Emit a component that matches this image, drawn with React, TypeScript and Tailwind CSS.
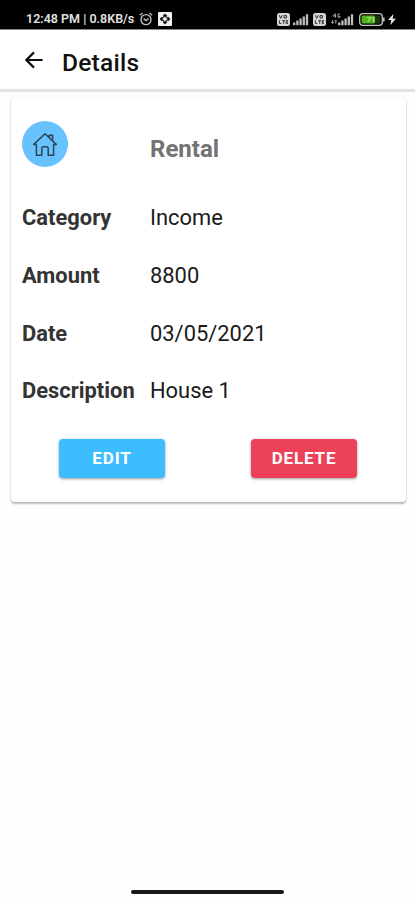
import type { ReactNode } from "react";

type Detail = { label: string; value: string };

const details: Detail[] = [
  { label: "Category", value: "Income" },
  { label: "Amount", value: "8800" },
  { label: "Date", value: "03/05/2021" },
  { label: "Description", value: "House 1" },
];

function AlarmIcon() {
  return (
    <svg width="14" height="14" viewBox="0 0 14 14" fill="none" stroke="#bdbdbd" strokeWidth="1.4">
      <circle cx="7" cy="7.6" r="5" />
      <path d="M.8 3.2 3.6 1M13.2 3.2 10.4 1M4.6 6.6 7 8.6l2.6-2" />
    </svg>
  );
}

function AppBadgeIcon() {
  return (
    <svg width="14" height="14" viewBox="0 0 14 14">
      <rect width="14" height="14" rx="1" fill="#f2f2f2" />
      <path d="M7 1.6 12.4 7 7 12.4 1.6 7Z" fill="#111" />
      <path d="M7 4.4 9.6 7 7 9.6 4.4 7Z" fill="#e8e8e8" />
      <path d="M3.2 3.2l2 2M10.8 3.2l-2 2M3.2 10.8l2-2M10.8 10.8l-2-2" stroke="#f2f2f2" strokeWidth="1.2" />
    </svg>
  );
}

function VolteIcon() {
  return (
    <svg width="13" height="13" viewBox="0 0 13 13">
      <rect width="13" height="13" rx="2.5" fill="#d6d6d6" />
      <path
        d="M2.2 2.2 3.7 5.4 5.2 2.2M7 2.6h2.4v2.4H7zM2.4 7.4v3h2M5.4 7.6h2.6M6.7 7.6v3.2M11 7.6H9.2v2.8H11M9.2 9H11"
        fill="none"
        stroke="#333"
        strokeWidth="1"
      />
    </svg>
  );
}

function SignalIcon({ network }: { network?: boolean }) {
  return (
    <svg width="23" height="13" viewBox="0 0 23 13" className={network ? "" : "-ml-[6px]"}>
      {network && (
        <path
          d="M4 .6 2 3h3M4.4.8v3.8M9 1.2H7v3h2V3M1.6 7v3.4M.4 9l1.2 1.4L2.8 9M4.8 10.6V7.2M3.8 8.2l1-1 1 1"
          fill="none"
          stroke="#a8a8a8"
          strokeWidth="1"
        />
      )}
      <path
        d="M8.2 12.2V9.4M11.4 12.2V7.6M14.6 12.2V5.4M17.8 12.2V3.4M21 12.2V1.2"
        stroke="#bdbdbd"
        strokeWidth="2.3"
      />
    </svg>
  );
}

function BatteryIcon() {
  return (
    <svg width="27" height="13" viewBox="0 0 27 13">
      <rect x=".7" y=".7" width="22.6" height="11.6" rx="3" fill="none" stroke="#c4c4c4" strokeWidth="1.3" />
      <rect x="2.6" y="2.6" width="13.4" height="7.8" rx="1" fill="#4fb31d" />
      <rect x="16" y="2.6" width="5.2" height="7.8" rx="1" fill="#1c3513" />
      <path d="M24.8 4.4v4.2" stroke="#c4c4c4" strokeWidth="1.6" />
      <text x="12" y="9.4" textAnchor="middle" fontSize="8" fontWeight="700" fill="#a9e08c">
        71
      </text>
    </svg>
  );
}

function StatusBar() {
  return (
    <div className="flex h-[30px] items-center justify-between border-b border-[#888] bg-black pt-[9px] pr-[19px] pl-[26px]">
      <div className="flex items-center">
        <span className="w-[111px] text-[12.5px] leading-none font-semibold whitespace-nowrap text-[#e0e0e0]">
          12:48 PM | 0.8KB/s
        </span>
        <span className="mr-[5px] ml-[2px]">
          <AlarmIcon />
        </span>
        <AppBadgeIcon />
      </div>
      <div className="flex items-center">
        <VolteIcon />
        <span className="mr-1 ml-[2px]">
          <SignalIcon />
        </span>
        <VolteIcon />
        <span className="mr-[5px] ml-[5px]">
          <SignalIcon network />
        </span>
        <BatteryIcon />
        <svg width="8" height="11" viewBox="0 0 8 11" className="ml-[2px]">
          <path d="M5.4 0 0 6h3.2L2.4 11 8 4.8H4.7Z" fill="#e6e6e6" />
        </svg>
      </div>
    </div>
  );
}

function HouseIcon() {
  return (
    <svg
      width="26"
      height="26"
      viewBox="0 0 26 26"
      fill="none"
      stroke="#2f4352"
      strokeWidth="1.5"
      strokeLinejoin="round"
      strokeLinecap="round"
    >
      <path d="M1.8 13.4 13 2.8l11.2 10.6M17.2 6.4V4.2h3.4v5.4" />
      <path d="M1.8 13.4h2.6v10.8h5.4v-6.6q0-1.8 1.8-1.8h2.8q1.8 0 1.8 1.8v6.6h5.4V13.4h2.4" />
    </svg>
  );
}

function ActionButton({ className, children }: { className: string; children: ReactNode }) {
  return (
    <button
      type="button"
      className={`h-[39px] w-[106px] rounded-[4px] text-[17px] font-bold tracking-[0.05em] shadow-[0_1px_3px_rgba(0,0,0,0.4)] ${className}`}
    >
      {children}
    </button>
  );
}

export default function App() {
  return (
    <div className="flex h-[900px] w-full flex-col overflow-hidden bg-[#fefefe] font-['Roboto',sans-serif]">
      <StatusBar />
      <header className="flex h-[62px] items-center border-b-[3px] border-[#e2e2e2] bg-white pl-[25px]">
        <button type="button" aria-label="Back" className="mr-[19px]">
          <svg width="18" height="18" viewBox="0 0 18 18" fill="none" stroke="#111" strokeWidth="2.2">
            <path d="M17.6 9H1.6M9 1.4 1.4 9 9 16.6" />
          </svg>
        </button>
        <h1 className="mt-[8px] text-[24.5px] font-medium tracking-[0.01em] text-[#111]">Details</h1>
      </header>

      <main className="mr-[9px] ml-[11px] mt-[6px] h-[404px] rounded-[4px] bg-white px-[11px] shadow-[0_2px_2px_rgba(0,0,0,0.26),0_0_2px_rgba(0,0,0,0.12)]">
        <div className="flex h-[92px] items-center">
          <div className="flex w-[128px]">
            <div className="flex size-[46px] items-center justify-center rounded-full bg-[#68c2fd]">
              <HouseIcon />
            </div>
          </div>
          <h2 className="mt-[9px] text-[24px] font-bold text-[#737373]">Rental</h2>
        </div>
        <dl>
          {details.map((d) => (
            <div key={d.label} className="flex h-[57.6px] items-center text-[21.9px]">
              <dt className="w-[128px] font-bold whitespace-nowrap text-[#333]">{d.label}</dt>
              <dd className="text-[#1a1a1a]">{d.value}</dd>
            </div>
          ))}
        </dl>
        <div className="mt-[19px] flex justify-between pr-[38px] pl-[37px]">
          <ActionButton className="bg-[#3dbdfd] text-white">EDIT</ActionButton>
          <ActionButton className="bg-[#ec4159] text-white">DELETE</ActionButton>
        </div>
      </main>

      <div className="mx-auto mt-auto mb-[6px] h-1 w-[153px] rounded-full bg-[#1a1a1a]" />
    </div>
  );
}
